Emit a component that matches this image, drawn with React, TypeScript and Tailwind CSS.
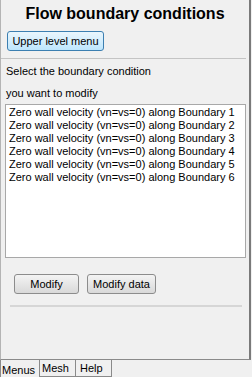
import React from "react";

const rows = [1, 2, 3, 4, 5, 6].map(
  (n) => `Zero wall velocity (vn=vs=0) along Boundary ${n}`
);

export default function App() {
  return (
    <div className="w-[252px] h-[377px] bg-[#f0f0f0] flex flex-col font-['Liberation_Sans',Arial,sans-serif] text-[11px] text-black overflow-hidden">
      <div className="w-[251px] h-[360px] border-l border-l-[#b4b4b4] border-r-2 border-r-[#7a7a7a] border-b border-b-[#8a8a8a] flex flex-col">
        <div className="pt-[4px] text-center text-[16px] font-bold leading-[20px]">
          Flow boundary conditions
        </div>
        <button className="mt-[7px] ml-[6px] w-[97px] h-[20px] rounded-[3px] border border-[#3c7fb1] bg-gradient-to-b from-[#eaf6fd] to-[#bee6fd] text-[11px] leading-none text-black">
          Upper level menu
        </button>
        <div className="mt-[7px] w-[245px] h-px bg-[#c4c4c4]" />
        <div className="pt-[1px] pl-[5px] leading-[22px]">
          <div>Select the boundary condition</div>
          <div>you want to modify</div>
        </div>
        <div className="ml-[4px] w-[241px] h-[154px] bg-white border border-[#a8a8a8] pt-[1px] pl-[3px] leading-[13px]">
          {rows.map((r) => (
            <div key={r} className="whitespace-nowrap">
              {r}
            </div>
          ))}
        </div>
        <div className="mt-[16px] ml-[13px] flex gap-[8px]">
          <button className="w-[65px] h-[20px] rounded-[3px] border border-[#8c8c8c] bg-gradient-to-b from-[#f4f4f4] to-[#d9d9d9] text-[11px] leading-none text-black">
            Modify
          </button>
          <button className="w-[69px] h-[20px] rounded-[3px] border border-[#8c8c8c] bg-gradient-to-b from-[#f4f4f4] to-[#d9d9d9] text-[11px] leading-none text-black">
            Modify data
          </button>
        </div>
        <div className="mt-[11px] ml-[9px] w-[232px] h-[2px] bg-[#d6d6d6]" />
      </div>
      <div className="flex h-[17px] leading-[16px]">
        <div className="w-[39px] border-l border-l-[#8a8a8a] pl-[1px] pt-[2px]">
          Menus
        </div>
        <div className="w-[37px] border border-t-0 border-[#8a8a8a] pl-[2px]">
          Mesh
        </div>
        <div className="w-[36px] border border-t-0 border-l-0 border-[#8a8a8a] pl-[4px]">
          Help
        </div>
      </div>
    </div>
  );
}
